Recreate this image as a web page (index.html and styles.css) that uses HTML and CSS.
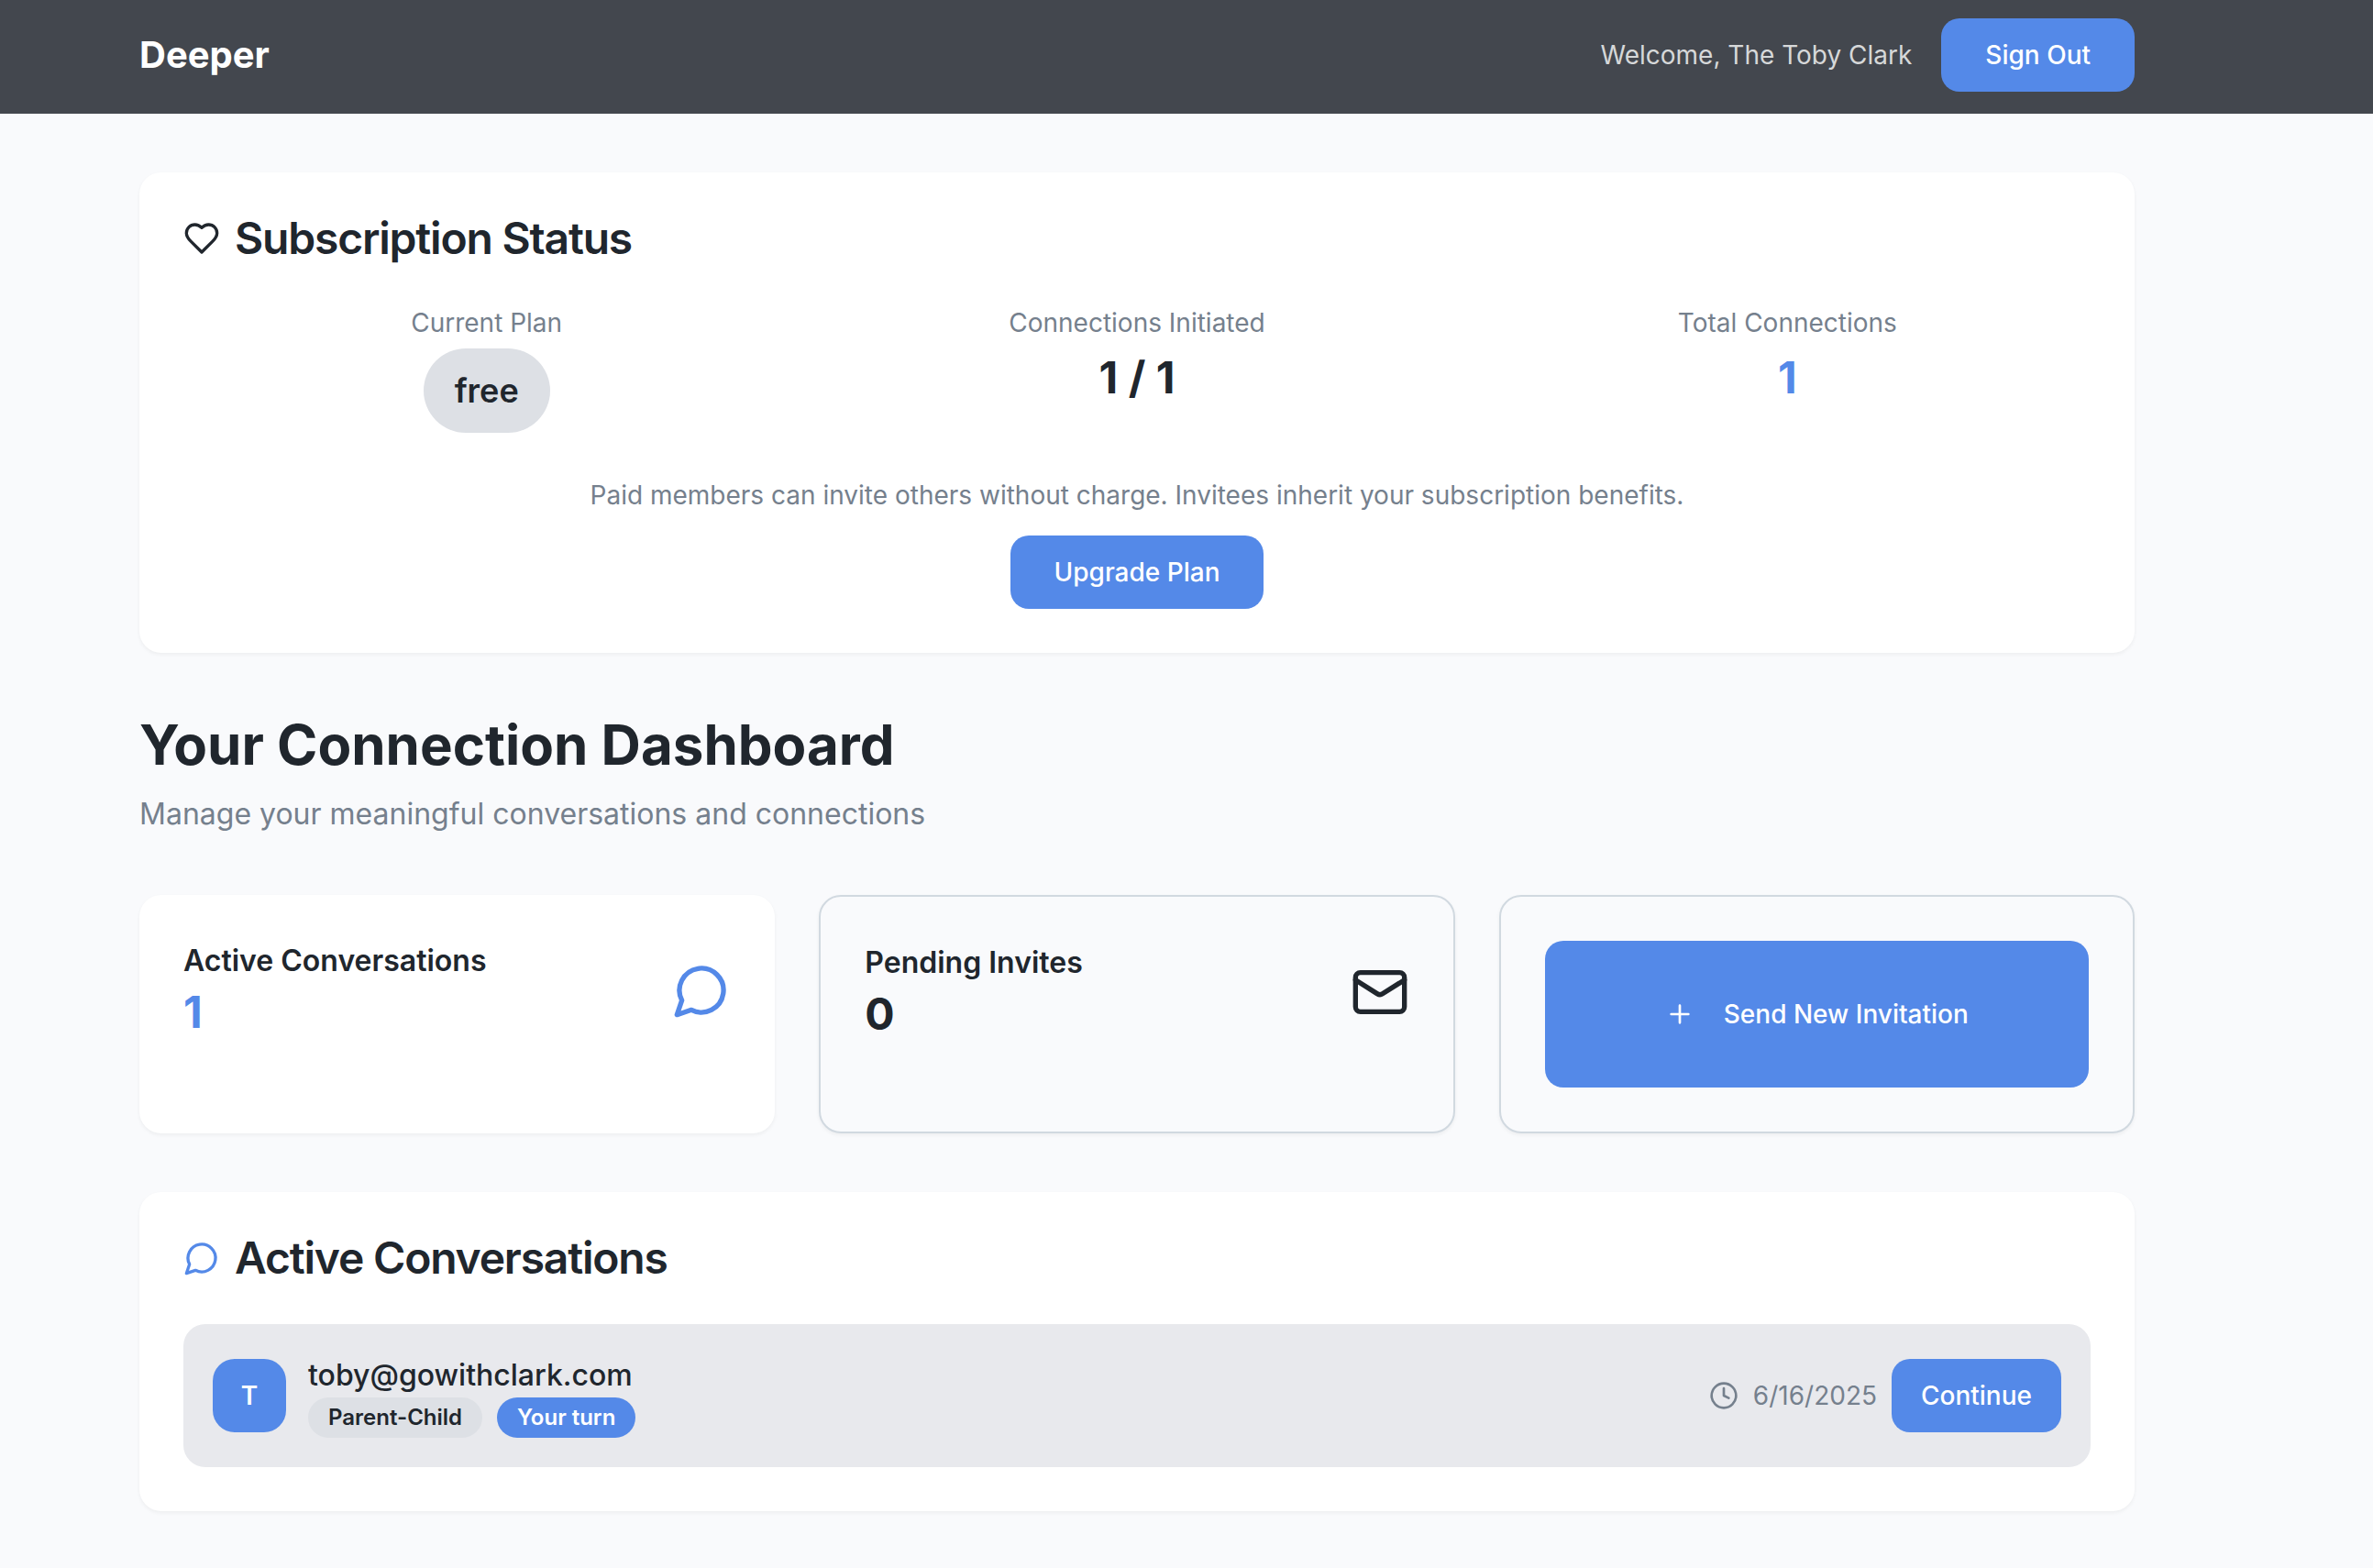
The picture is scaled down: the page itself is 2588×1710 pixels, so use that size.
FILE: index.html
```html
<!DOCTYPE html>
<html lang="en">
<head>
<meta charset="utf-8">
<meta name="viewport" content="width=device-width, initial-scale=1">
<title>Deeper</title>
<link rel="stylesheet" href="styles.css">
</head>
<body>
<header class="topbar">
  <a class="brand" href="#">Deeper</a>
  <div class="account">
    <span class="welcome">Welcome, The Toby Clark</span>
    <button class="btn" type="button">Sign Out</button>
  </div>
</header>

<main class="page">
  <section class="card subscription">
    <h2 class="card-title">
      <svg class="icon icon-md" viewBox="0 0 24 24" aria-hidden="true"><path d="M19 14c1.49-1.46 3-3.21 3-5.5A5.5 5.5 0 0 0 16.5 3c-1.76 0-3 .5-4.5 2-1.5-1.5-2.74-2-4.5-2A5.5 5.5 0 0 0 2 8.5c0 2.3 1.5 4.05 3 5.5l7 7Z"/></svg>
      Subscription Status
    </h2>
    <div class="plan-stats">
      <div class="plan-stat">
        <p class="muted">Current Plan</p>
        <span class="badge badge-lg">free</span>
      </div>
      <div class="plan-stat">
        <p class="muted">Connections Initiated</p>
        <p class="figure">1 / 1</p>
      </div>
      <div class="plan-stat">
        <p class="muted">Total Connections</p>
        <p class="figure accent">1</p>
      </div>
    </div>
    <div class="upgrade">
      <p class="muted">Paid members can invite others without charge. Invitees inherit your subscription benefits.</p>
      <button class="btn" type="button">Upgrade Plan</button>
    </div>
  </section>

  <section class="intro">
    <h1 class="page-title">Your Connection Dashboard</h1>
    <p class="subtitle">Manage your meaningful conversations and connections</p>
  </section>

  <section class="tiles">
    <div class="card tile">
      <div class="tile-row">
        <div>
          <h3 class="tile-title">Active Conversations</h3>
          <p class="figure accent">1</p>
        </div>
        <svg class="icon icon-lg accent" viewBox="0 0 24 24" aria-hidden="true"><path d="M7.9 20A9 9 0 1 0 4 16.1L2 22Z"/></svg>
      </div>
    </div>
    <div class="card tile tile-outline">
      <div class="tile-row">
        <div>
          <h3 class="tile-title">Pending Invites</h3>
          <p class="figure">0</p>
        </div>
        <svg class="icon icon-lg" viewBox="0 0 24 24" aria-hidden="true"><rect width="20" height="16" x="2" y="4" rx="2"/><path d="m22 7-8.97 5.7a1.94 1.94 0 0 1-2.06 0L2 7"/></svg>
      </div>
    </div>
    <div class="card tile tile-outline">
      <button class="btn btn-invite" type="button">
        <svg class="icon icon-sm" viewBox="0 0 24 24" aria-hidden="true"><path d="M5 12h14M12 5v14"/></svg>
        Send New Invitation
      </button>
    </div>
  </section>

  <section class="card conversations">
    <h2 class="card-title">
      <svg class="icon icon-md accent" viewBox="0 0 24 24" aria-hidden="true"><path d="M7.9 20A9 9 0 1 0 4 16.1L2 22Z"/></svg>
      Active Conversations
    </h2>
    <div class="conversation">
      <div class="avatar">T</div>
      <div class="person">
        <p class="email">toby@gowithclark.com</p>
        <div class="tags">
          <span class="badge">Parent-Child</span>
          <span class="badge badge-accent">Your turn</span>
        </div>
      </div>
      <div class="activity">
        <svg class="icon icon-sm" viewBox="0 0 24 24" aria-hidden="true"><circle cx="12" cy="12" r="10"/><path d="M12 6v6l4 2"/></svg>
        <time datetime="2025-06-16">6/16/2025</time>
      </div>
      <button class="btn btn-compact" type="button">Continue</button>
    </div>
  </section>
</main>
</body>
</html>
```
FILE: styles.css
```css
:root {
  --page: #f9fafc;
  --card: #ffffff;
  --ink: #20262d;
  --muted: #75808d;
  --blue: #5489e8;
  --line: #d1d9e0;
  --chip: #dde0e5;
  --row: #e8e9ed;
  --header: #43474e;
}

* {
  box-sizing: border-box;
}

body {
  margin: 0;
  background: var(--page);
  color: var(--ink);
  font-family: Inter, "Liberation Sans", sans-serif;
  font-size: 28px;
  line-height: 40px;
  font-optical-sizing: none;
}

h1,
h2,
h3,
p {
  margin: 0;
}

.topbar,
.page {
  padding-left: 152px;
  padding-right: 260px;
}

.topbar {
  display: flex;
  align-items: center;
  justify-content: space-between;
  padding-top: 20px;
  padding-bottom: 24px;
  background: var(--header);
}

.brand {
  color: #ffffff;
  font-size: 40px;
  line-height: 56px;
  font-weight: 700;
  text-decoration: none;
}

.account {
  display: flex;
  align-items: center;
  gap: 32px;
}

.welcome {
  color: #d6d8d9;
}

.btn {
  display: inline-flex;
  align-items: center;
  justify-content: center;
  gap: 32px;
  height: 80px;
  padding: 0 48px;
  border: 0;
  border-radius: 20px;
  background: var(--blue);
  color: #ffffff;
  font: inherit;
  font-weight: 500;
  white-space: nowrap;
}

.btn-compact {
  padding: 0 32px;
}

.btn-invite {
  width: 100%;
  height: 160px;
}

.page {
  display: flex;
  flex-direction: column;
  gap: 64px;
  padding-top: 64px;
  padding-bottom: 62px;
}

.card {
  padding: 48px;
  border-radius: 24px;
  background: var(--card);
  box-shadow: 0 2px 4px rgba(0, 0, 0, 0.05);
}

.card-title {
  display: flex;
  align-items: center;
  gap: 16px;
  margin-bottom: 48px;
  font-size: 48px;
  line-height: 48px;
  font-weight: 600;
  letter-spacing: -0.025em;
}

.muted {
  color: var(--muted);
}

.accent {
  color: var(--blue);
}

.plan-stats {
  display: grid;
  grid-template-columns: repeat(3, 1fr);
  gap: 48px;
  margin-bottom: 48px;
}

.plan-stat {
  display: flex;
  flex-direction: column;
  align-items: center;
  gap: 8px;
}

.figure {
  font-size: 48px;
  line-height: 64px;
  font-weight: 700;
}

.upgrade {
  display: flex;
  flex-direction: column;
  align-items: center;
  gap: 24px;
}

.badge {
  padding: 6px 22px;
  border-radius: 24px;
  background: var(--chip);
  font-size: 24px;
  line-height: 32px;
  font-weight: 600;
}

.badge-lg {
  padding: 18px 34px;
  border-radius: 48px;
  font-size: 36px;
  line-height: 56px;
}

.badge-accent {
  background: var(--blue);
  color: #ffffff;
}

.intro {
  display: flex;
  flex-direction: column;
  gap: 16px;
}

.page-title {
  font-size: 60px;
  line-height: 72px;
  font-weight: 700;
}

.subtitle {
  color: var(--muted);
  font-size: 32px;
  line-height: 48px;
}

.tiles {
  display: grid;
  grid-template-columns: repeat(3, 1fr);
  gap: 48px;
}

.tile-outline {
  border: 2px solid var(--line);
  background: var(--page);
}

.tile-row {
  display: flex;
  align-items: center;
  justify-content: space-between;
}

.tile-title {
  font-size: 32px;
  line-height: 48px;
  font-weight: 600;
}

.conversation {
  display: flex;
  align-items: center;
  gap: 16px;
  padding: 32px;
  border-radius: 24px;
  background: var(--row);
}

.avatar {
  display: flex;
  align-items: center;
  justify-content: center;
  width: 80px;
  height: 80px;
  margin-right: 8px;
  border-radius: 24px;
  background: var(--blue);
  color: #ffffff;
  font-weight: 600;
}

.person {
  flex: 1;
}

.email {
  font-size: 32px;
  line-height: 48px;
  font-weight: 500;
}

.tags {
  display: flex;
  gap: 16px;
}

.activity {
  display: flex;
  align-items: center;
  gap: 16px;
  color: var(--muted);
}

.icon {
  flex: none;
  fill: none;
  stroke: currentColor;
  stroke-width: 2;
  stroke-linecap: round;
  stroke-linejoin: round;
}

.icon-sm {
  width: 32px;
  height: 32px;
}

.icon-md {
  width: 40px;
  height: 40px;
}

.icon-lg {
  width: 64px;
  height: 64px;
}
```
